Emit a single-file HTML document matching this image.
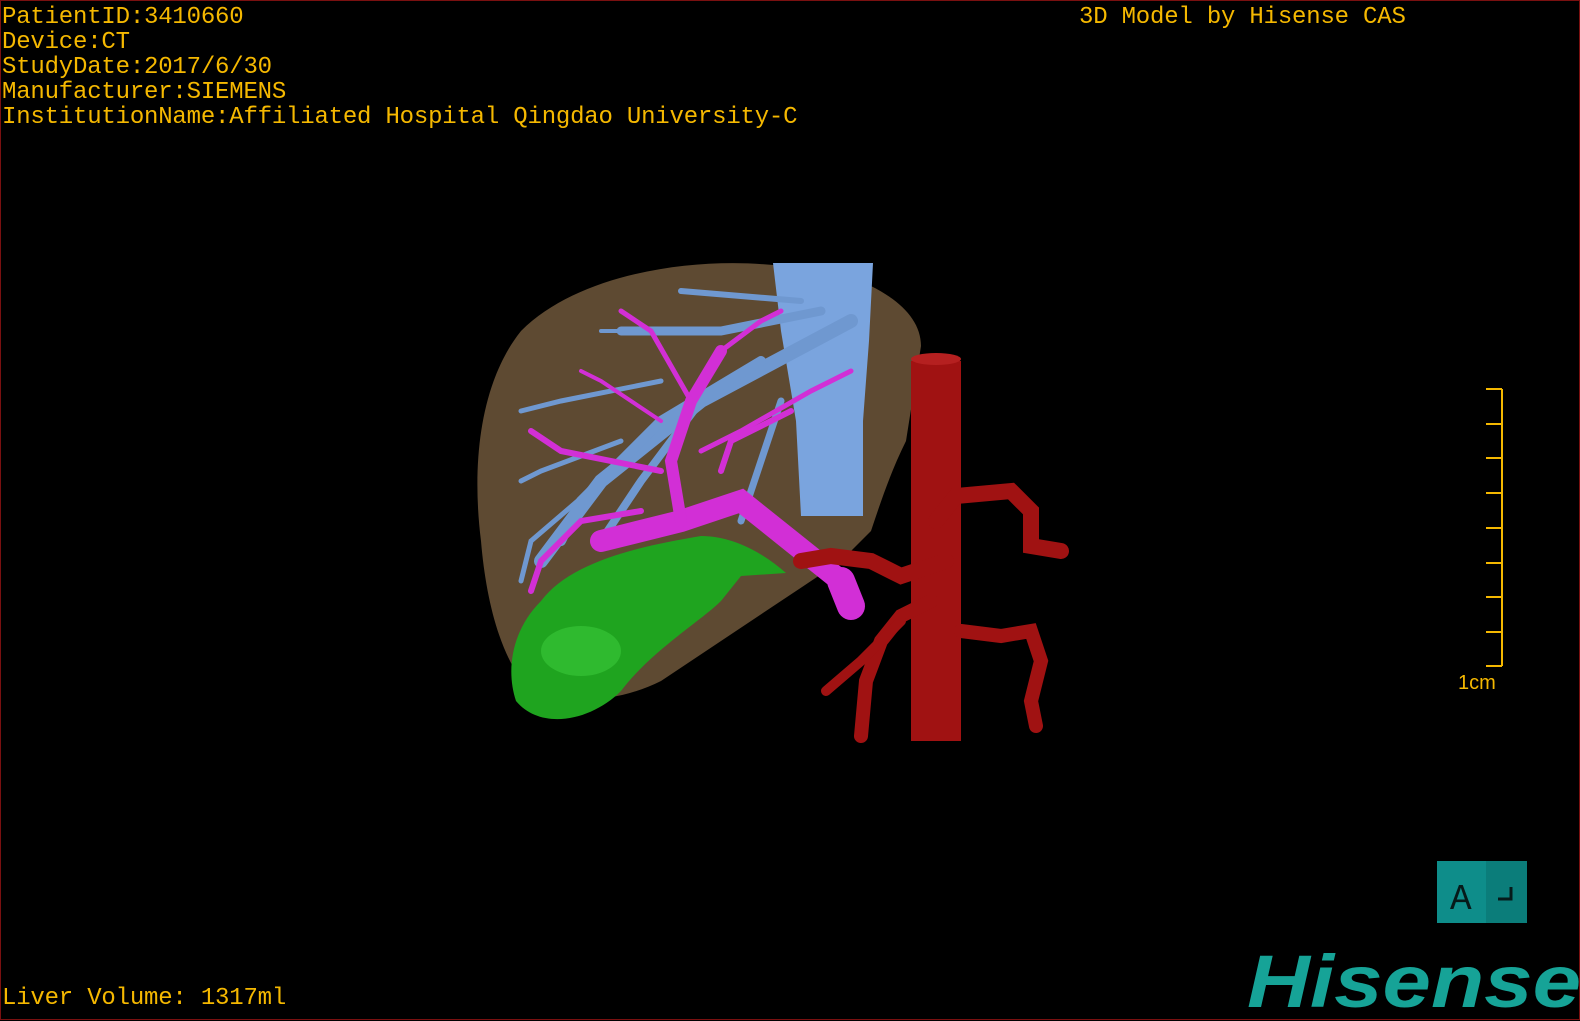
<!DOCTYPE html>
<html><head><meta charset="utf-8"><style>
html,body{margin:0;padding:0;background:#000;}
body{width:1580px;height:1020px;position:relative;overflow:hidden;box-sizing:border-box;border:1px solid #7a1010;}
.t{position:absolute;font-family:"Liberation Mono",monospace;font-size:24px;color:#f5b800;line-height:25px;white-space:pre;letter-spacing:-0.2px;}
</style></head><body>
<div class="t" style="left:1px;top:4px">PatientID:3410660
Device:CT
StudyDate:2017/6/30
Manufacturer:SIEMENS
InstitutionName:Affiliated Hospital Qingdao University-C</div>
<div class="t" style="left:1078px;top:4px">3D Model by Hisense CAS</div>
<div class="t" style="left:1px;top:985px">Liver Volume: 1317ml</div>

<svg width="1580" height="1020" style="position:absolute;left:0;top:0">
<path d="M520 330 C580 270 700 255 780 265 L870 285 C900 300 920 320 920 345 L905 440 C890 470 880 500 870 530 L840 560 C780 600 720 640 660 680 C620 700 570 705 530 690 C500 660 485 600 480 540 C470 460 480 380 520 330Z" fill="#5e4a32"/>
<path d="M772 262 L872 262 L868 340 L862 420 L862 515 L800 515 L795 420 L780 330Z" fill="#7aa4de"/>
<g stroke="#6f98d0" stroke-linecap="round" fill="none">
<path d="M850 320 L700 400 L600 480 L540 560" stroke-width="14"/>
<path d="M820 310 L720 330 L620 330" stroke-width="9"/>
<path d="M800 300 L680 290" stroke-width="6"/>
<path d="M760 360 L660 420 L580 500 L560 540" stroke-width="10"/>
<path d="M700 400 L640 480 L600 540" stroke-width="8"/>
<path d="M660 380 L560 400 L520 410" stroke-width="5"/>
<path d="M620 440 L540 470 L520 480" stroke-width="5"/>
<path d="M600 480 L530 540 L520 580" stroke-width="5"/>
<path d="M780 400 L760 460 L740 520" stroke-width="7"/>
<path d="M640 330 L600 330" stroke-width="4"/>
</g>
<g stroke="#d22fd6" stroke-linecap="round" fill="none">
<path d="M600 540 L680 520 L740 500 L790 540 L840 580" stroke-width="22"/>
<path d="M840 580 L850 605" stroke-width="28"/>
<path d="M680 520 L670 460 L690 400 L720 350" stroke-width="12"/>
<path d="M660 470 L560 450 L530 430" stroke-width="6"/>
<path d="M640 510 L580 520 L540 560 L530 590" stroke-width="6"/>
<path d="M700 450 L740 430 L810 390 L850 370" stroke-width="5"/>
<path d="M690 400 L650 330 L620 310" stroke-width="5"/>
<path d="M720 350 L760 320 L780 310" stroke-width="5"/>
<path d="M660 420 L600 380 L580 370" stroke-width="4"/>
<path d="M720 470 L730 440 L790 410" stroke-width="6"/>
</g>
<path d="M540 600 C570 560 640 545 700 535 C730 535 760 550 785 572 L740 575 L720 600 C700 620 650 650 620 690 C590 720 540 730 515 700 C505 670 510 630 540 600Z" fill="#1fa41f"/>
<ellipse cx="580" cy="650" rx="40" ry="25" fill="#3fd03f" opacity="0.5"/>
<g stroke="#a01212" stroke-linecap="round" fill="none">
<path d="M935 360 L935 740" stroke-width="50" stroke-linecap="butt"/>
<path d="M935 520 L955 495 L1010 490 L1030 510 L1030 545 L1060 550" stroke-width="16"/>
<path d="M945 560 L900 575 L870 560 L830 555 L800 560" stroke-width="16"/>
<path d="M930 600 L900 615 L880 640 L865 680 L860 735" stroke-width="14"/>
<path d="M900 620 L860 660 L825 690" stroke-width="10"/>
<path d="M960 630 L1000 635 L1030 630 L1040 660 L1030 700 L1035 725" stroke-width="14"/>
</g>
<ellipse cx="935" cy="358" rx="25" ry="6" fill="#b52020"/>
<g stroke="#f5b800" stroke-width="2">
<path d="M1501 388 L1501 665"/>
<path d="M1485 388 L1501 388 M1485 423 L1501 423 M1485 457 L1501 457 M1485 492 L1501 492 M1485 527 L1501 527 M1485 562 L1501 562 M1485 596 L1501 596 M1485 631 L1501 631 M1485 665 L1501 665"/>
</g>
<text x="1457" y="688" font-family="Liberation Sans,sans-serif" font-size="20" fill="#f5b800">1cm</text>
<rect x="1436" y="860" width="90" height="62" fill="#0e8d8a"/>
<rect x="1485" y="860" width="41" height="62" fill="#0b7d7a"/>
<text x="1449" y="908" font-family="Liberation Mono,monospace" font-size="36" fill="#061a1a">A</text>
<path d="M1497 898 L1510 898 L1510 886" stroke="#061a1a" stroke-width="3" fill="none"/>
<text x="1246" y="1006" font-family="Liberation Sans,sans-serif" font-weight="bold" font-style="italic" font-size="74" fill="#16a397" textLength="334" lengthAdjust="spacingAndGlyphs">Hisense</text>
</svg>
</body></html>
